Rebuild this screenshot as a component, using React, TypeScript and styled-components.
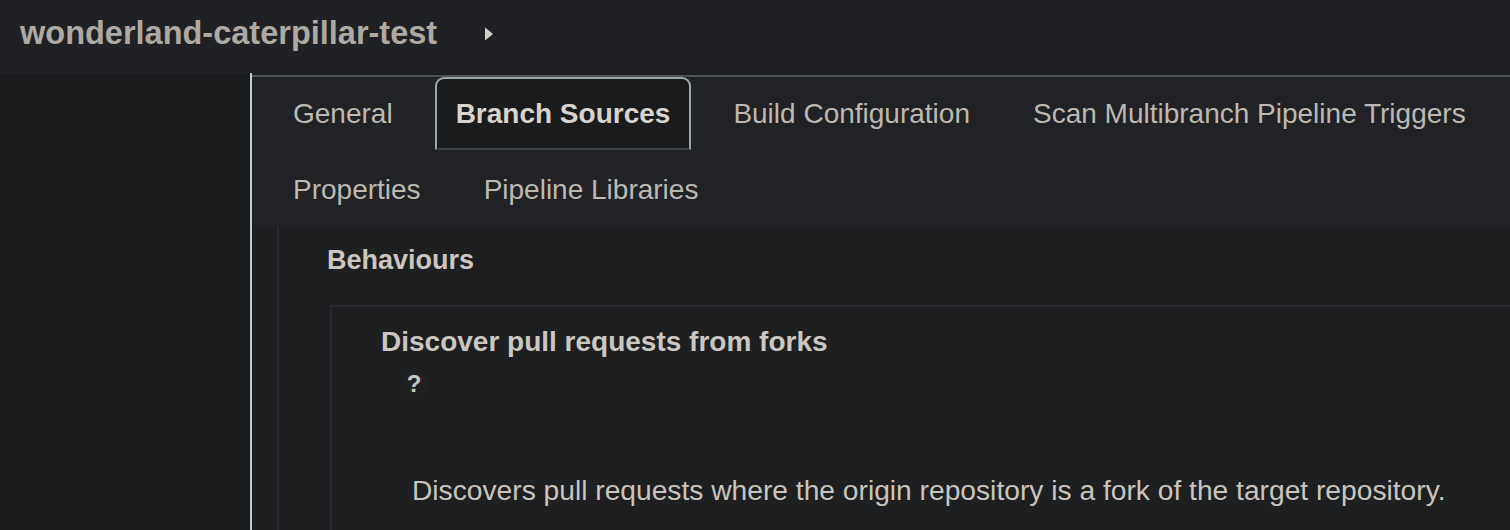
import React from "react";
import styled, { createGlobalStyle } from "styled-components";

const GlobalStyle = createGlobalStyle`
  html, body {
    margin: 0;
    padding: 0;
    background: #1a1b1d;
    overflow: hidden;
  }
  body {
    font-family: "Liberation Sans", Helvetica, Arial, sans-serif;
    color: #c9c5be;
  }
`;

const tabs = [
  { label: "General" },
  { label: "Branch Sources", active: true },
  { label: "Build Configuration" },
  { label: "Scan Multibranch Pipeline Triggers" },
  { label: "Properties" },
  { label: "Pipeline Libraries" },
];

const App = () => {
  return (
    <SPage>
      <GlobalStyle />
      <SHeader>
        <STitle>wonderland-caterpillar-test</STitle>
        <SCaret width="10" height="14" viewBox="0 0 10 14">
          <path d="M1 0.5 L9 7 L1 13.5 Z" fill="#d4d0c9" />
        </SCaret>
      </SHeader>
      <SBody>
        <SSidebar />
        <SMain>
          <STabBar>
            {tabs.map((t) => (
              <STab key={t.label} $active={t.active}>
                {t.label}
              </STab>
            ))}
          </STabBar>
          <SSection>
            <SSectionInner>
              <SSectionTitle>Behaviours</SSectionTitle>
              <SBox>
                <SBoxTitle>Discover pull requests from forks</SBoxTitle>
                <SHelp>?</SHelp>
                <SDescription>
                  Discovers pull requests where the origin repository is a fork
                  of the target repository.
                </SDescription>
              </SBox>
            </SSectionInner>
          </SSection>
        </SMain>
      </SBody>
    </SPage>
  );
};

export default App;

const SPage = styled.div`
  width: 1510px;
  height: 530px;
  display: flex;
  flex-direction: column;
  overflow: hidden;
`;

const SHeader = styled.header`
  height: 73px;
  flex-shrink: 0;
  background: #202124;
  display: flex;
  align-items: center;
  padding-left: 20px;
  box-sizing: border-box;
`;

const STitle = styled.h1`
  margin: -6px 0 0;
  font-size: 32.5px;
  font-weight: 700;
  color: #aea9a2;
`;

const SCaret = styled.svg`
  margin-left: 47px;
  margin-top: -6px;
`;

const SBody = styled.div`
  flex: 1;
  display: flex;
  min-height: 0;
`;

const SSidebar = styled.aside`
  width: 250px;
  flex-shrink: 0;
  background: #1a1b1d;
`;

const SMain = styled.main`
  flex: 1;
  border-left: 2px solid #c6cbcf;
  background: #1e1f21;
  padding-top: 2px;
  min-width: 0;
`;

const STabBar = styled.nav`
  display: flex;
  flex-wrap: wrap;
  column-gap: 21px;
  row-gap: 3px;
  padding: 0 0 0 20px;
  background: #212225;
  border-top: 2px solid #4d5358;
`;

const STab = styled.div<{ $active?: boolean }>`
  height: 73px;
  box-sizing: border-box;
  padding: 0 19px;
  display: flex;
  align-items: center;
  font-size: 28px;
  white-space: nowrap;
  border: 2px solid;
  border-radius: 9px 9px 0 0;
  color: ${(p) => (p.$active ? "#d8d4cd" : "#bdb9b2")};
  font-weight: ${(p) => (p.$active ? 700 : 400)};
  background: ${(p) => (p.$active ? "#1a1b1d" : "transparent")};
  border-color: ${(p) =>
    p.$active ? "#9aa5ac #9aa5ac #3c4044 #9aa5ac" : "transparent"};
`;

const SSection = styled.section`
  padding-left: 25px;
`;

const SSectionInner = styled.div`
  border-left: 2px solid #2a2b2e;
  padding: 19px 0 0 48px;
  min-height: 320px;
`;

const SSectionTitle = styled.h2`
  margin: 0;
  font-size: 27px;
  font-weight: 700;
  color: #cbc7c0;
  line-height: 30px;
`;

const SBox = styled.div`
  margin: 30px 0 0 3px;
  width: calc(100% + 40px);
  border-top: 2px solid #2a2b2e;
  border-left: 2px solid #2a2b2e;
  padding: 20px 0 40px 49px;
  box-sizing: border-box;
  background: #1e1f21;
`;

const SBoxTitle = styled.h3`
  margin: 0;
  font-size: 28px;
  font-weight: 700;
  color: #cbc7c0;
  line-height: 30px;
`;

const SHelp = styled.span`
  display: inline-flex;
  align-items: center;
  justify-content: center;
  width: 30px;
  height: 30px;
  margin: 12px 0 0 18px;
  border-radius: 50%;
  background: #202123;
  font-size: 24px;
  font-weight: 700;
  color: #c9c5be;
`;

const SDescription = styled.p`
  margin: 76px 0 0 31px;
  font-size: 28.2px;
  color: #c9c5be;
  line-height: 30px;
`;
